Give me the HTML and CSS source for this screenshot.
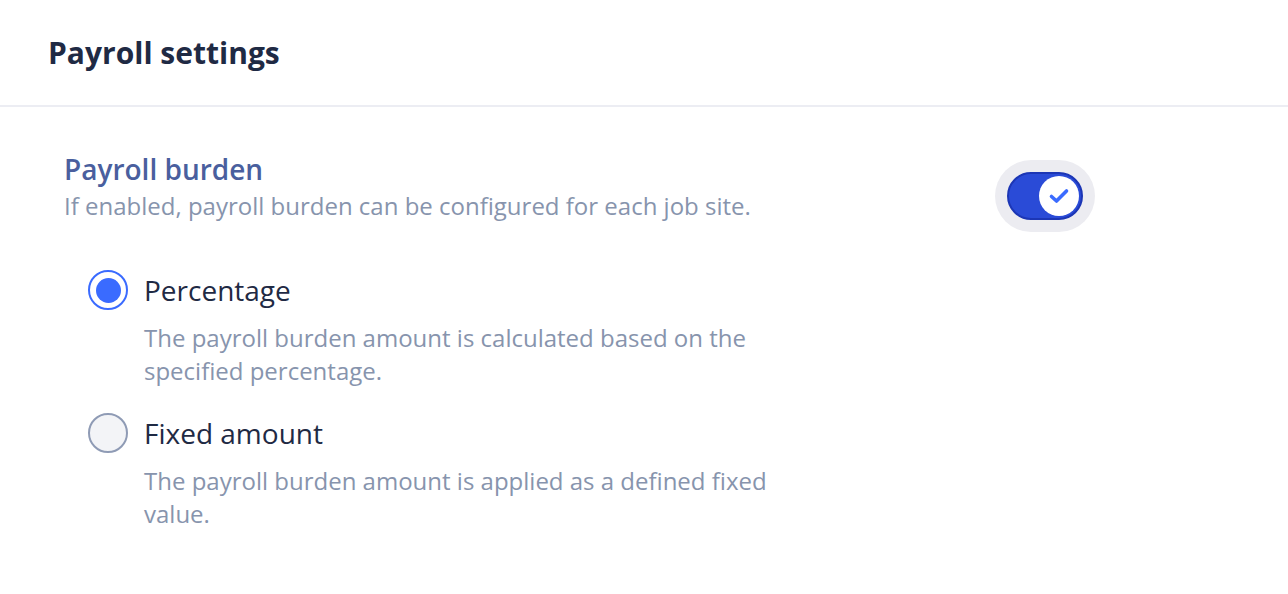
FILE: index.html
```html
<!DOCTYPE html>
<html lang="en">
<head>
  <meta charset="UTF-8">
  <title>Payroll settings</title>
  <link rel="stylesheet" href="styles.css">
</head>
<body>
  <div class="panel">
    <div class="panel-header">
      <h1>Payroll settings</h1>
    </div>

    <div class="panel-body">
      <div class="setting">
        <div class="setting-text">
          <h2>Payroll burden</h2>
          <p class="hint">If enabled, payroll burden can be configured for each job site.</p>
        </div>
        <div class="toggle-wrap">
          <div class="toggle on">
            <span class="knob">
              <svg width="24" height="24" viewBox="0 0 24 24">
                <path d="M4.5 12.5 L9.5 17 L19.5 7" fill="none" stroke="#3a6bff" stroke-width="3.6" stroke-linecap="round" stroke-linejoin="round"/>
              </svg>
            </span>
          </div>
        </div>
      </div>

      <div class="options">
        <label class="option">
          <span class="radio checked"></span>
          <span class="option-text">
            <span class="option-title">Percentage</span>
            <span class="option-desc">The payroll burden amount is calculated based on the specified percentage.</span>
          </span>
        </label>
        <label class="option">
          <span class="radio"></span>
          <span class="option-text">
            <span class="option-title">Fixed amount</span>
            <span class="option-desc">The payroll burden amount is applied as a defined fixed value.</span>
          </span>
        </label>
      </div>
    </div>
  </div>
</body>
</html>
```

FILE: styles.css
```css
body { margin: 0; font-family: "Open Sans", Arial, sans-serif; background: #fff; color: #1f2a44; }
.panel { width: 1288px; }
.panel-header { height: 105px; display: flex; align-items: center; padding-left: 48px; border-bottom: 2px solid #ecedf3; }
.panel-header h1 { margin: 0; font-size: 30px; font-weight: 700; color: #1f2a44; }

.panel-body { padding: 43px 0 0 64px; }
.setting { display: flex; justify-content: space-between; width: 1031px; }
.setting-text h2 { margin: 0; font-size: 28px; font-weight: 600; color: #4a5f9e; line-height: 38px; }
.hint { margin: 0; font-size: 24px; color: #8794ad; line-height: 36px; }

.toggle-wrap { width: 100px; height: 72px; border-radius: 36px; background: #ececf1; display: flex; align-items: center; justify-content: center; margin-top: 10px; }
.toggle { width: 76px; height: 48px; border-radius: 24px; background: #2a4bd7; border: 2px solid #1c36b5; box-sizing: border-box; display: flex; align-items: center; justify-content: flex-end; padding-right: 2px; }
.knob { width: 40px; height: 40px; border-radius: 50%; background: #fff; display: flex; align-items: center; justify-content: center; }

.options { padding: 38px 0 0 24px; display: flex; flex-direction: column; gap: 26px; }
.option { display: flex; gap: 16px; cursor: pointer; }
.radio { width: 40px; height: 40px; border-radius: 50%; box-sizing: border-box; border: 2px solid #8f9bb5; background: #f3f4f7; flex-shrink: 0; margin-top: 0; }
.radio.checked { border-color: #3a6bff; background: #fff; display: flex; align-items: center; justify-content: center; }
.radio.checked::after { content: ""; width: 25px; height: 25px; border-radius: 50%; background: #3a6bff; }
.option-text { display: flex; flex-direction: column; }
.option-title { font-size: 28px; line-height: 40px; color: #1f2a44; }
.option-desc { font-size: 24px; line-height: 33px; color: #8794ad; max-width: 640px; margin-top: 11px; }
```
